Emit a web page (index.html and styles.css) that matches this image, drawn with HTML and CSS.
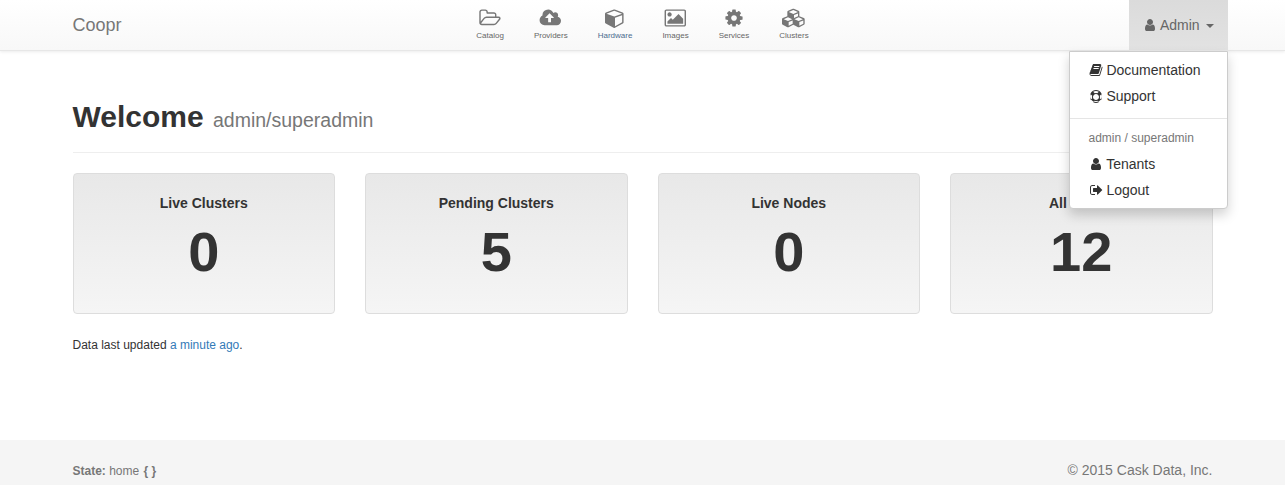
FILE: index.html
```html
<!DOCTYPE html>
<html>
	<head>
		<title>Coopr</title>
		<link rel="stylesheet" href="styles.css">
	</head>
	<body>
		<svg class="defs" xmlns="http://www.w3.org/2000/svg">
			<symbol id="i-user" viewBox="0 0 1792 1792"><path d="M1536 1399q0 109-62.500 187t-150.500 78h-854q-88 0-150.500-78t-62.500-187q0-85 8.500-160.500t31.500-151.500 58.500-130 94-88.500 134.500-34.500q131 128 313 128t313-128q76 0 134.500 34.500t94 88.500 58.500 130 31.500 151.500 8.500 160.500zm-256-887q0 159-112.500 271.500t-271.500 112.500-271.500-112.500-112.500-271.500 112.500-271.500 271.500-112.500 271.500 112.500 112.500 271.500z"/></symbol>
			<symbol id="i-cog" viewBox="0 0 1792 1792"><path d="M1152 896q0-106-75-181t-181-75-181 75-75 181 75 181 181 75 181-75 75-181zm512-109v222q0 12-8 23t-20 13l-185 28q-19 54-39 91 35 50 107 138 10 12 10 25t-9 23q-27 37-99 108t-94 71q-12 0-26-9l-138-108q-44 23-91 38-16 136-29 186-7 28-36 28h-222q-14 0-24.500-8.500t-11.500-21.500l-28-184q-49-16-90-37l-141 107q-10 9-25 9-14 0-25-11-126-114-165-168-7-10-7-23 0-12 8-23 15-21 51-66.500t54-70.500q-27-50-41-99l-183-27q-13-2-21-12.500t-8-23.500v-222q0-12 8-23t19-13l186-28q14-46 39-92-40-57-107-138-10-12-10-24 0-10 9-23 26-36 98.500-107.500t94.500-71.500q13 0 26 10l138 107q44-23 91-38 16-136 29-186 7-28 36-28h222q14 0 24.500 8.500t11.500 21.500l28 184q49 16 90 37l142-107q9-9 24-9 13 0 25 10 129 119 165 170 7 8 7 22 0 12-8 23-15 21-51 66.500t-54 70.500q26 50 41 98l183 28q13 2 21 12.500t8 23.500z"/></symbol>
			<symbol id="i-folder" viewBox="0 0 2048 1792"><path d="M1845 931q0-35-53-35h-1088q-40 0-85.500 21.500t-71.500 52.500l-294 363q-18 24-18 40 0 35 53 35h1088q40 0 86-22t71-53l294-363q18-22 18-39zm-1141-163h768v-160q0-40-28-68t-68-28h-576q-40 0-68-28t-28-68v-64q0-40-28-68t-68-28h-320q-40 0-68 28t-28 68v853l256-315q44-53 116-87.500t140-34.500zm1269 163q0 62-46 120l-295 363q-43 53-116 87.500t-140 34.500h-1088q-92 0-158-66t-66-158v-960q0-92 66-158t158-66h320q92 0 158 66t66 158v32h544q92 0 158 66t66 158v160h192q54 0 99 24.500t67 70.500q15 32 15 68z"/></symbol>
			<symbol id="i-cloud" viewBox="0 0 1920 1792"><path d="M1216 864q0-14-9-23l-352-352q-9-9-23-9t-23 9l-351 351q-10 12-10 24 0 14 9 23t23 9h224v352q0 13 9.500 22.500t22.500 9.500h192q13 0 22.500-9.500t9.500-22.500v-352h224q13 0 22.500-9.500t9.500-22.500zm640 288q0 159-112.500 271.500t-271.500 112.500h-1088q-185 0-316.500-131.500t-131.500-316.500q0-130 70-240t188-165q-2-30-2-43 0-212 150-362t362-150q156 0 285.500 87t188.500 231q71-62 166-62 106 0 181 75t75 181q0 76-41 138 130 31 213.500 135.500t83.500 238.500z"/></symbol>
			<symbol id="i-cube" viewBox="0 0 1792 1792"><path d="M896 1629l640-349v-636l-640 233v752zm-64-865l698-254-698-254-698 254zm832-252v768q0 35-18 65t-49 47l-704 384q-28 16-61 16t-61-16l-704-384q-31-17-49-47t-18-65v-768q0-40 23-73t61-47l704-256q22-8 44-8t44 8l704 256q38 14 61 47t23 73z"/></symbol>
			<symbol id="i-image" viewBox="0 0 1920 1792"><path d="M576 576q0 80-56 136t-136 56-136-56-56-136 56-136 136-56 136 56 56 136zm1024 384v448h-1408v-192l320-320 160 160 512-512zm96-704h-1600q-13 0-22.500 9.500t-9.500 22.500v1216q0 13 9.500 22.500t22.500 9.500h1600q13 0 22.500-9.500t9.500-22.500v-1216q0-13-9.500-22.500t-22.500-9.500zm160 32v1216q0 66-47 113t-113 47h-1600q-66 0-113-47t-47-113v-1216q0-66 47-113t113-47h1600q66 0 113 47t47 113z"/></symbol>
			<symbol id="i-cubes" viewBox="0 0 2304 1792"><path d="M640 1632l384-192v-314l-384 164v342zm-64-454l404-173-404-173-404 173zm1088 454l384-192v-314l-384 164v342zm-64-454l404-173-404-173-404 173zm-448-293l384-165v-266l-384 164v267zm-64-379l441-189-441-189-441 189zm1088 518v416q0 36-19 67t-52 47l-448 224q-25 14-57 14t-57-14l-448-224q-5-2-7-4-2 2-7 4l-448 224q-25 14-57 14t-57-14l-448-224q-33-16-52-47t-19-67v-416q0-38 21.500-70t56.500-48l434-186v-400q0-38 21.500-70t56.500-48l448-192q23-10 50-10t50 10l448 192q35 16 56.500 48t21.500 70v400l434 186q36 16 57 48t21 70z"/></symbol>
			<symbol id="i-book" viewBox="0 0 1792 1792"><path d="M1703 478q40 57 18 129l-275 906q-19 64-76.500 107.500t-122.500 43.500h-923q-77 0-148.500-53.500t-99.500-131.500q-24-67-2-127 0-4 3-27t4-37q1-8-3-21.500t-3-19.500q2-11 8-21t16.500-23.500 16.500-23.500q23-38 45-91.500t30-91.500q3-10 .5-30t-.5-28q3-11 17-28t17-23q21-36 42-92t25-90q1-9-2.500-32t.5-28q4-13 22-30.500t22-22.500q19-26 42.500-84.500t27.500-96.500q1-8-3-25.500t-2-26.500q2-8 9-18t18-23 17-21q8-12 16.500-30.500t15-35 16-36 19.500-32 26.500-23.500 36-11.500 47.500 5.500l-1 3q38-9 51-9h761q74 0 114 56t18 130l-274 906q-36 119-71.500 153.500t-128.500 34.500h-869q-27 0-38 15-11 16-1 43 24 70 144 70h923q29 0 56-15.500t35-41.500l300-987q7-22 5-57 38 15 59 43zm-1064 2q-4 13 2 22.500t20 9.500h608q13 0 25.500-9.500t16.500-22.500l21-64q4-13-2-22.500t-20-9.500h-608q-13 0-25.500 9.500t-16.500 22.500zm-83 256q-4 13 2 22.500t20 9.500h608q13 0 25.500-9.500t16.500-22.500l21-64q4-13-2-22.500t-20-9.500h-608q-13 0-25.500 9.500t-16.500 22.500z"/></symbol>
			<symbol id="i-ring" viewBox="0 0 1792 1792"><path d="M896 128q209 0 385.500 103t279.500 279.500 103 385.500-103 385.500-279.500 279.500-385.500 103-385.500-103-279.500-279.500-103-385.500 103-385.500 279.500-279.500 385.500-103zm0 128q-190 0-361 90l194 194q82-28 167-28t167 28l194-194q-171-90-361-90zm-678 1129l194-194q-28-82-28-167t28-167l-194-194q-90 171-90 361t90 361zm678 407q190 0 361-90l-194-194q-82 28-167 28t-167-28l-194 194q171 90 361 90zm0-384q159 0 271.500-112.500t112.500-271.500-112.500-271.500-271.500-112.500-271.500 112.500-112.500 271.500 112.500 271.500 271.500 112.500zm484-217l194 194q90-171 90-361t-90-361l-194 194q28 82 28 167t-28 167z"/></symbol>
			<symbol id="i-signout" viewBox="0 0 1664 1792"><path d="M704 1440q0 4 1 20t.5 26.500-3 23.500-10 19.500-20.500 6.500h-320q-119 0-203.500-84.500t-84.500-203.500v-704q0-119 84.500-203.500t203.500-84.500h320q13 0 22.500 9.500t9.500 22.500q0 4 1 20t.5 26.500-3 23.500-10 19.500-20.500 6.500h-320q-66 0-113 47t-47 113v704q0 66 47 113t113 47h312l11.500 1 11.500 3 8 5.500 7 9 2 13.500zm928-544q0 26-19 45l-544 544q-19 19-45 19t-45-19-19-45v-288h-448q-26 0-45-19t-19-45v-384q0-26 19-45t45-19h448v-288q0-26 19-45t45-19 45 19l544 544q19 19 19 45z"/></symbol>
		</svg>

		<nav class="navbar">
			<div class="navbar-inner">
				<a class="brand" href="#">Coopr</a>
				<ul class="nav-icons">
					<li><a href="#"><svg class="nav-icon icon-wide"><use href="#i-folder"/></svg><span>Catalog</span></a></li>
					<li><a href="#"><svg class="nav-icon icon-wide"><use href="#i-cloud"/></svg><span>Providers</span></a></li>
					<li><a href="#"><svg class="nav-icon"><use href="#i-cube"/></svg><span class="hardware">Hardware</span></a></li>
					<li><a href="#"><svg class="nav-icon icon-wide"><use href="#i-image"/></svg><span>Images</span></a></li>
					<li><a href="#"><svg class="nav-icon"><use href="#i-cog"/></svg><span>Services</span></a></li>
					<li><a href="#"><svg class="nav-icon icon-wide"><use href="#i-cubes"/></svg><span>Clusters</span></a></li>
				</ul>
				<div class="user-menu">
					<a class="user-toggle" href="#"><svg class="fa"><use href="#i-user"/></svg> Admin <b class="caret"></b></a>
					<ul class="dropdown">
						<li><a href="#"><svg class="fa"><use href="#i-book"/></svg> Documentation</a></li>
						<li><a href="#"><svg class="fa"><use href="#i-ring"/></svg> Support</a></li>
						<li class="divider"></li>
						<li class="dropdown-header">admin / superadmin</li>
						<li><a href="#"><svg class="fa"><use href="#i-user"/></svg> Tenants</a></li>
						<li><a href="#"><svg class="fa"><use href="#i-signout"/></svg> Logout</a></li>
					</ul>
				</div>
			</div>
		</nav>

		<main class="container">
			<div class="page-header">
				<h1>Welcome <small>admin/superadmin</small></h1>
			</div>
			<div class="stats">
				<div class="stat"><h4>Live Clusters</h4><div class="stat-value">0</div></div>
				<div class="stat"><h4>Pending Clusters</h4><div class="stat-value">5</div></div>
				<div class="stat"><h4>Live Nodes</h4><div class="stat-value">0</div></div>
				<div class="stat"><h4>All Nodes</h4><div class="stat-value">12</div></div>
			</div>
			<p class="updated">Data last updated <a href="#">a minute ago</a>.</p>
		</main>

		<footer class="footer">
			<div class="footer-inner">
				<div class="state"><strong>State:</strong> home <code>{ }</code></div>
				<div class="copyright">© 2015 Cask Data, Inc.</div>
			</div>
		</footer>
	</body>
</html>
```

FILE: styles.css
```css
*
{
	box-sizing: border-box;
}
html, body
{
	margin: 0;
	height: 485px;
	overflow: hidden;
}
body
{
	background-color: #fff;
	font-family: "Liberation Sans", Arial, sans-serif;
	font-size: 12px;
	color: #333;
	display: flex;
	flex-direction: column;
}
a
{
	text-decoration: none;
	color: inherit;
}
ul
{
	list-style: none;
	margin: 0;
	padding: 0;
}
.defs
{
	display: none;
}
.fa
{
	width: 14px;
	height: 14px;
	fill: currentColor;
	vertical-align: -2px;
}

/* navbar */
.navbar
{
	height: 51px;
	background: linear-gradient(to bottom, #fff 0%, #f8f8f8 100%);
	border-bottom: 1px solid #e7e7e7;
	box-shadow: 0 1px 3px rgba(0, 0, 0, 0.08);
	flex: none;
}
.navbar-inner
{
	width: 1170px;
	margin: 0 auto;
	padding: 0 15px;
	height: 50px;
	display: grid;
	grid-template-columns: 1fr auto 1fr;
}
.brand
{
	font-size: 18px;
	line-height: 50px;
	color: #777;
}
.nav-icons
{
	display: flex;
}
.nav-icons a
{
	display: flex;
	flex-direction: column;
	align-items: center;
	padding: 8px 15px 0;
	color: #777;
	font-size: 8px;
}
.nav-icons span
{
	margin-top: 3px;
	line-height: 10px;
	color: #666;
}
.nav-icons .hardware
{
	color: #4b6c8f;
}
.nav-icon
{
	width: 20px;
	height: 20px;
	fill: #777;
}
.nav-icon.icon-wide
{
	width: 24px;
}
.user-menu
{
	position: relative;
	justify-self: end;
	margin-right: -15px;
}
.user-toggle
{
	display: block;
	height: 50px;
	line-height: 50px;
	padding: 0 14px;
	font-size: 14px;
	color: #666;
	background: linear-gradient(to bottom, #dbdbdb 0%, #e2e2e2 100%);
	white-space: nowrap;
}
.caret
{
	display: inline-block;
	width: 0;
	height: 0;
	margin-left: 2px;
	vertical-align: middle;
	border-top: 4px solid #666;
	border-left: 4px solid transparent;
	border-right: 4px solid transparent;
}

/* dropdown */
.dropdown
{
	position: absolute;
	z-index: 10;
	top: 51px;
	right: 0;
	width: 159px;
	padding: 5px 0;
	background-color: #fff;
	border: 1px solid #ccc;
	border-radius: 0 0 4px 4px;
	box-shadow: 0 6px 12px rgba(0, 0, 0, 0.175);
	font-size: 14px;
	color: #333;
}
.dropdown a
{
	display: block;
	height: 26px;
	line-height: 26px;
	padding: 0 19px;
	white-space: nowrap;
}
.divider
{
	height: 1px;
	margin: 9px 0;
	background-color: #e5e5e5;
}
.dropdown-header
{
	height: 23px;
	line-height: 21px;
	padding: 0 19px;
	font-size: 12px;
	color: #777;
}

/* main */
.container
{
	width: 1170px;
	margin: 0 auto;
	padding: 0 15px;
	flex: 1;
}
.page-header
{
	margin-top: 44px;
	height: 58px;
	border-bottom: 1px solid #eee;
}
h1
{
	margin: 0;
	font-size: 30px;
	line-height: 44px;
	font-weight: bold;
	color: #333;
}
h1 small
{
	font-size: 19.5px;
	font-weight: normal;
	color: #777;
	margin-left: 1px;
}
.stats
{
	display: grid;
	grid-template-columns: repeat(4, 1fr);
	column-gap: 30px;
	margin-top: 20px;
}
.stat
{
	height: 141px;
	border: 1px solid #ddd;
	border-radius: 4px;
	background: linear-gradient(to bottom, #e8e8e8 0%, #f5f5f5 100%);
	text-align: center;
}
.stat h4
{
	margin: 21px 0 0;
	font-size: 14px;
	line-height: 16px;
	font-weight: bold;
}
.stat-value
{
	margin-top: 9px;
	font-size: 56px;
	line-height: 64px;
	font-weight: bold;
}
.updated
{
	margin: 23px 0 0;
	line-height: 16px;
}
.updated a
{
	color: #337ab7;
}

/* footer */
.footer
{
	height: 45px;
	background-color: #f5f5f5;
	color: #777;
	flex: none;
}
.footer-inner
{
	width: 1170px;
	margin: 0 auto;
	padding: 0 15px;
	display: flex;
	justify-content: space-between;
}
.state
{
	margin-top: 23px;
	line-height: 16px;
}
.state code
{
	font-family: "Liberation Sans", Arial, sans-serif;
	font-weight: bold;
	margin-left: 1px;
}
.copyright
{
	margin-top: 22px;
	font-size: 14px;
	line-height: 16px;
}
```
